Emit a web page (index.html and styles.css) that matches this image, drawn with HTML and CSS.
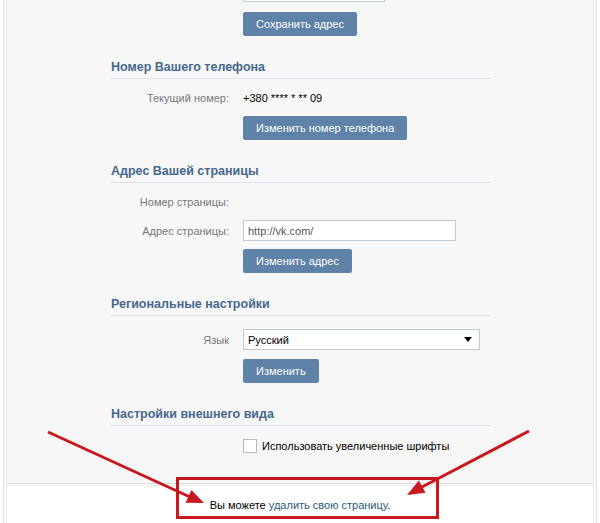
FILE: index.html
```html
<!DOCTYPE html>
<html lang="ru">
<head>
    <meta charset="UTF-8">
    <title>Настройки</title>
    <link rel="stylesheet" href="styles.css">
</head>
<body>

<div class="page">
    <div class="inner">
        <div class="settings">
            <div class="content">

                <div class="section section-first">
                    <div class="row row-cut">
                        <div class="label"></div>
                        <input type="text" class="text-input input-short">
                    </div>
                    <div class="row row-button row-save">
                        <div class="label"></div>
                        <button class="btn">Сохранить адрес</button>
                    </div>
                </div>

                <div class="section">
                    <h3 class="section-title">Номер Вашего телефона</h3>
                    <div class="row">
                        <div class="label">Текущий номер:</div>
                        <div class="value">+380 **** * ** 09</div>
                    </div>
                    <div class="row row-button">
                        <div class="label"></div>
                        <button class="btn">Изменить номер телефона</button>
                    </div>
                </div>

                <div class="section">
                    <h3 class="section-title">Адрес Вашей страницы</h3>
                    <div class="row">
                        <div class="label">Номер страницы:</div>
                        <div class="value"></div>
                    </div>
                    <div class="row row-field">
                        <div class="label">Адрес страницы:</div>
                        <input type="text" class="text-input input-address" value="http://vk.com/">
                    </div>
                    <div class="row row-button">
                        <div class="label"></div>
                        <button class="btn">Изменить адрес</button>
                    </div>
                </div>

                <div class="section">
                    <h3 class="section-title">Региональные настройки</h3>
                    <div class="row row-select">
                        <div class="label">Язык</div>
                        <div class="select-wrap">
                            <select class="select">
                                <option>Русский</option>
                            </select>
                        </div>
                    </div>
                    <div class="row row-button row-apply">
                        <div class="label"></div>
                        <button class="btn">Изменить</button>
                    </div>
                </div>

                <div class="section">
                    <h3 class="section-title">Настройки внешнего вида</h3>
                    <div class="row row-check">
                        <div class="label"></div>
                        <label class="checkbox">
                            <span class="check-box"></span>
                            Использовать увеличенные шрифты
                        </label>
                    </div>
                </div>

            </div>
        </div>

        <div class="footer">
            <span>Вы можете <a href="#" class="link">удалить свою страницу</a>.</span>
        </div>
    </div>

    <!-- red marks drawn over the screenshot -->
    <svg class="marks" width="600" height="523" viewBox="0 0 600 523">
        <rect x="179.5" y="478.5" width="260" height="39" fill="none" stroke="#c8181f" stroke-width="3"/>
        <line x1="50" y1="432" x2="192" y2="497" stroke="#c8181f" stroke-width="3"/>
        <polygon points="206,503 187.6,502.7 193.4,489.9" fill="#c8181f"/>
        <line x1="531" y1="431" x2="422" y2="488" stroke="#c8181f" stroke-width="3"/>
        <polygon points="409,495 420.9,480.4 427.5,492.8" fill="#c8181f"/>
    </svg>
</div>

</body>
</html>
```

FILE: styles.css
```css
body {
    margin: 0;
    font-family: "Liberation Sans", Arial, sans-serif;
    font-size: 11px;
    color: #000000;
    background-color: #ffffff;
}
.page {
    position: relative;
    height: 523px;
    margin: 0 3px;
    padding: 0 2px;
    border-left: 1px solid #dfe2e5;
    border-right: 1px solid #dfe2e5;
    overflow: hidden;
}
.inner {
    height: 100%;
    border-left: 1px solid #ebebeb;
    border-right: 1px solid #ebebeb;
}
.settings {
    display: flow-root;
    height: 484px;
    background-color: #f7f7f7;
    border-bottom: 1px solid #dcdcdc;
    box-sizing: border-box;
}
.content {
    width: 379px;
    margin-left: 104px;
}
.section {
    padding-top: 23px;
}
.section-first {
    padding-top: 0;
}
.section-title {
    margin: 0 0 9px 0;
    padding-bottom: 3px;
    font-size: 12.5px;
    line-height: 16px;
    font-weight: bold;
    color: #45688e;
    border-bottom: 1px solid #dae1e8;
}
.row {
    display: flex;
    align-items: center;
    min-height: 20px;
}
.label {
    width: 118px;
    margin-right: 14px;
    flex-shrink: 0;
    text-align: right;
    color: #777777;
}
.value {
    color: #000000;
}
.row-cut {
    margin-top: -19px;
}
.row-field {
    margin-top: 8px;
}
.row-button {
    margin-top: 8px;
}
.row-save {
    margin-top: 10px;
}
.row-select {
    margin-top: 13px;
}
.row-apply {
    margin-top: 9px;
}
.row-check {
    margin-top: 10px;
}
.text-input {
    height: 21px;
    padding: 2px 4px;
    border: 1px solid #c0cad5;
    background-color: #ffffff;
    font-family: inherit;
    font-size: 11px;
    color: #555555;
    box-sizing: border-box;
}
.input-short {
    width: 142px;
}
.input-address {
    width: 213px;
}
.btn {
    height: 24px;
    padding: 0 13px;
    border: none;
    border-radius: 2px;
    background-color: #5e82a8;
    color: #ffffff;
    font-family: inherit;
    font-size: 11px;
}
.select-wrap {
    position: relative;
}
.select-wrap::after {
    content: "";
    position: absolute;
    right: 8px;
    top: 8px;
    border-left: 4px solid transparent;
    border-right: 4px solid transparent;
    border-top: 5px solid #000000;
}
.select {
    width: 237px;
    height: 21px;
    padding: 0 4px;
    border: 1px solid #c0cad5;
    background-color: #ffffff;
    font-family: inherit;
    font-size: 11px;
    color: #000000;
    appearance: none;
    -webkit-appearance: none;
    border-radius: 0;
}
.checkbox {
    display: flex;
    align-items: center;
    color: #000000;
}
.check-box {
    width: 12px;
    height: 12px;
    margin-right: 5px;
    border: 1px solid #b8b8b8;
    background-color: #ffffff;
}
.footer {
    margin-top: 1px;
    border-top: 1px solid #ececec;
    height: 37px;
    display: flex;
    align-items: center;
    justify-content: center;
    color: #000000;
}
.link {
    color: #2b587a;
    text-decoration: none;
}
.marks {
    position: absolute;
    top: 0;
    left: -6px;
    pointer-events: none;
}
```
